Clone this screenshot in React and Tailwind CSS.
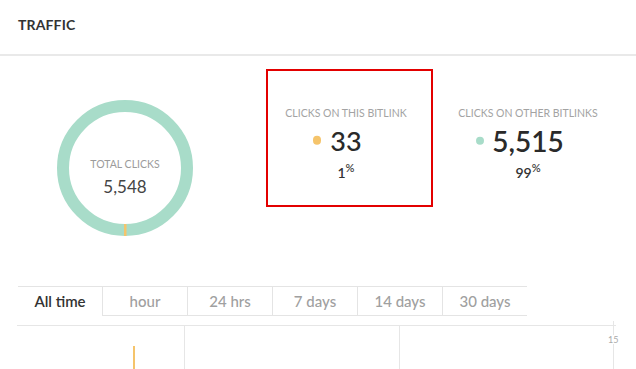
export default function App() {
  const tabs = ["hour", "24 hrs", "7 days", "14 days", "30 days"];
  return (
    <div className="relative w-[636px] h-[369px] overflow-hidden bg-white font-['Lato',_'Liberation_Sans',_sans-serif]">
      <header className="h-[56px] border-b-2 border-[#e9e9e9] pl-[18px] flex items-center pb-[5px]">
        <h1 className="text-[14px] leading-none font-bold text-[#333] tracking-[0.01em]">TRAFFIC</h1>
      </header>

      <section className="flex h-[230px]">
        <div className="relative ml-[57px] mt-[44px] w-[136px] h-[136px]">
          <svg width="136" height="136" viewBox="0 0 136 136" className="absolute inset-0">
            <circle cx="68" cy="68" r="62" fill="none" stroke="#a8dcc9" strokeWidth="12" />
            <rect x="67" y="124" width="2.5" height="12" fill="#f5c46b" />
          </svg>
          <div className="absolute inset-0 flex flex-col items-center pt-[59px]">
            <span className="text-[10.5px] leading-none text-[#9b9b9b]">TOTAL CLICKS</span>
            <span className="mt-[8px] text-[17px] leading-none text-[#444]">5,548</span>
          </div>
        </div>

        <div className="ml-[73px] mt-[13px] w-[167px] h-[138px] border-2 border-[#e30000] flex flex-col items-center pt-[37px] pr-[7px]">
          <span className="text-[10.5px] leading-none text-[#a3a3a3]">CLICKS ON THIS BITLINK</span>
          <div className="relative mt-[8px]">
            <span className="absolute right-full mr-[9px] top-1/2 -translate-y-1/2 w-[8.5px] h-[8.5px] rounded-full bg-[#f5c46b]" />
            <span className="block text-[27px] leading-none font-medium text-[#2a2a2a]">33</span>
          </div>
          <div className="mt-[8px] flex items-start">
            <span className="mt-[4px] text-[14px] leading-none font-semibold text-[#333]">1</span>
            <span className="text-[11px] leading-none font-semibold text-[#444]">%</span>
          </div>
        </div>

        <div className="mt-[13px] w-[190px] flex flex-col items-center pt-[39px]">
          <span className="text-[10.5px] leading-none text-[#a3a3a3]">CLICKS ON OTHER BITLINKS</span>
          <div className="relative mt-[8px]">
            <span className="absolute right-full mr-[8px] top-1/2 -translate-y-1/2 w-[8.5px] h-[8.5px] rounded-full bg-[#a8dcc9]" />
            <span className="block text-[28px] leading-none font-semibold text-[#2a2a2a]">5,515</span>
          </div>
          <div className="mt-[7px] flex items-start">
            <span className="mt-[4px] text-[14px] leading-none font-semibold text-[#333]">99</span>
            <span className="text-[11px] leading-none font-semibold text-[#444]">%</span>
          </div>
        </div>
      </section>

      <nav className="ml-[18px] w-[509px] flex border-t border-[#e4e4e4]">
        <div className="w-[84px] h-[29px] flex items-center justify-center text-[15px] font-semibold text-[#333]">
          All time
        </div>
        {tabs.map((t) => (
          <div
            key={t}
            className="w-[85px] h-[29px] flex items-center justify-center border-l border-b border-[#e4e4e4] text-[15px] font-medium text-[#a0a0a0]"
          >
            {t}
          </div>
        ))}
      </nav>

      <div className="relative ml-[17px] mt-[9px] w-[599px] h-[44px] border-t border-[#e6e6e6]">
        <div className="absolute left-[167px] top-0 bottom-0 w-px bg-[#e6e6e6]" />
        <div className="absolute left-[382px] top-0 bottom-0 w-px bg-[#e6e6e6]" />
        <div className="absolute left-[596px] -top-[5px] bottom-0 w-px bg-[#e6e6e6]" />
        <span className="absolute left-[590px] top-[9px] px-px bg-white text-[9px] leading-none text-[#aaa]">15</span>
        <div className="absolute left-[116px] top-[20px] bottom-0 w-[2px] bg-[#f5c46b]" />
      </div>
    </div>
  );
}
